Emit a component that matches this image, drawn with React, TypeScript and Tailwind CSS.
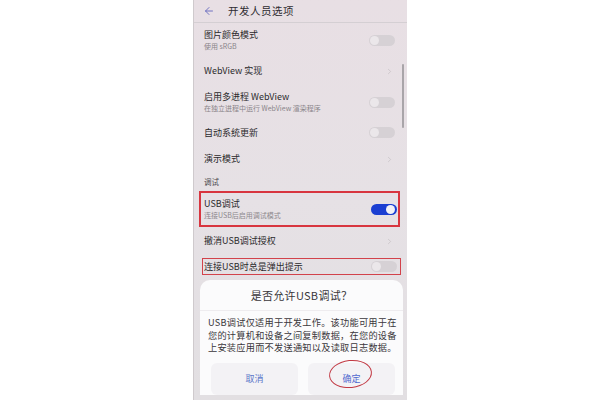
import { ArrowLeft, ChevronRight } from 'lucide-react';

const font = { fontFamily: '"Noto Sans CJK SC", "Noto Sans", sans-serif' };

function Toggle({ on = false }: { on?: boolean }) {
  return (
    <div
      className={`relative w-[26px] h-[11px] rounded-full shrink-0 ${on ? 'bg-[#1b3fd2]' : 'bg-[#d6d1d5]'}`}
    >
      <div
        className={`absolute top-[1px] w-[9px] h-[9px] rounded-full ${on ? 'right-[2px] bg-[#f2f2f7]' : 'left-[1px] bg-[#ebe7ea]'}`}
      />
    </div>
  );
}

function Chevron() {
  return <ChevronRight size={9} strokeWidth={1.5} className="text-[#bdb7bb] shrink-0 mr-[1px]" />;
}

function Row({
  title,
  sub,
  right,
  h,
}: {
  title: string;
  sub?: string;
  right: React.ReactNode;
  h: string;
}) {
  return (
    <div className={`flex items-center justify-between pl-[10px] pr-[12px] shrink-0 ${h}`}>
      <div className="flex flex-col">
        <span className="text-[9px] leading-[12px] text-[#2b2a2c]">{title}</span>
        {sub && <span className="text-[7px] leading-[11px] text-[#8a858a]">{sub}</span>}
      </div>
      {right}
    </div>
  );
}

export default function App() {
  return (
    <div className="w-[600px] h-[400px] bg-white flex justify-center overflow-hidden" style={font}>
      <div className="relative w-[214px] h-[400px] flex flex-col bg-gradient-to-b from-[#e8dfe4] via-[#e6e1e5] to-[#e2dfe2] border-l border-[#cfcacd]">
        {/* header */}
        <div className="h-[23px] flex items-center pl-[9px] border-b border-[#d4cfd3] shrink-0">
          <ArrowLeft size={12} strokeWidth={1.8} className="text-[#6468bd]" />
          <span className="ml-[13px] text-[10.5px] text-[#2f2c31] tracking-[0.5px]">开发人员选项</span>
        </div>

        <Row h="h-[34px] pt-[1px]" title="图片颜色模式" sub="使用 sRGB" right={<Toggle />} />
        <Row h="h-[28px]" title="WebView 实现" right={<Chevron />} />
        <Row h="h-[34px]" title="启用多进程 WebView" sub="在独立进程中运行 WebView 渲染程序" right={<Toggle />} />
        <Row h="h-[27px]" title="自动系统更新" right={<Toggle />} />
        <Row h="h-[26px]" title="演示模式" right={<Chevron />} />

        <div className="h-[19px] flex items-center pl-[10px] shrink-0">
          <span className="text-[7.5px] text-[#4a464b]">调试</span>
        </div>

        {/* highlighted USB debug */}
        <div className="h-[36px] ml-[5px] mr-[7px] border-2 border-[#d8353f] flex items-center justify-between pl-[3px] pr-[1px] shrink-0">
          <div className="flex flex-col">
            <span className="text-[9px] leading-[12px] text-[#2b2a2c]">USB调试</span>
            <span className="text-[7px] leading-[11px] text-[#8e898e]">连接USB后启用调试模式</span>
          </div>
          <Toggle on />
        </div>

        <Row h="h-[28px]" title="撤消USB调试授权" right={<Chevron />} />

        <div className="h-[17px] mt-[3px] ml-[8px] mr-[6px] border-[1.5px] border-[#d2424b] flex items-center justify-between pl-[1px] pr-[3px] shrink-0">
          <span className="text-[9px] text-[#2b2a2c]">连接USB时总是弹出提示</span>
          <Toggle />
        </div>

        {/* dialog */}
        <div className="mt-[5px] ml-[6px] mr-[4px] h-[115px] bg-[#fbfbfc] rounded-t-[10px] flex flex-col shrink-0">
          <div className="h-[31px] flex items-center justify-center border-b border-[#eeecef] shrink-0">
            <span className="text-[11px] text-[#39363a] tracking-[0.3px]">是否允许USB调试？</span>
          </div>
          <div className="pl-[8px] pt-[5px] text-[9.2px] leading-[12.5px] tracking-[0.25px] text-[#3a373b] whitespace-nowrap shrink-0">
            USB调试仅适用于开发工作。该功能可用于在
            <br />
            您的计算机和设备之间复制数据，在您的设备
            <br />
            上安装应用而不发送通知以及读取日志数据。
          </div>
          <div className="flex gap-[10px] pl-[11px] pr-[8px] mt-[9px] h-[32px] shrink-0">
            <div className="flex-1 rounded-[6px] bg-[#f3f2f5] flex items-center justify-center">
              <span className="text-[9px] text-[#5b77c9]">取消</span>
            </div>
            <div className="relative flex-1 rounded-[6px] bg-[#f3f2f5] flex items-center justify-center">
              <span className="text-[9px] text-[#4f68cf]">确定</span>
              <div className="absolute left-[21px] top-[-3px] w-[43px] h-[28px] rounded-[50%] border-[1.5px] border-[#c23a44] -rotate-6" />
            </div>
          </div>
        </div>

        {/* scrollbar */}
        <div className="absolute left-[208px] top-[64px] w-[2px] h-[64px] rounded-full bg-[#a9a5a9]" />
      </div>
    </div>
  );
}
